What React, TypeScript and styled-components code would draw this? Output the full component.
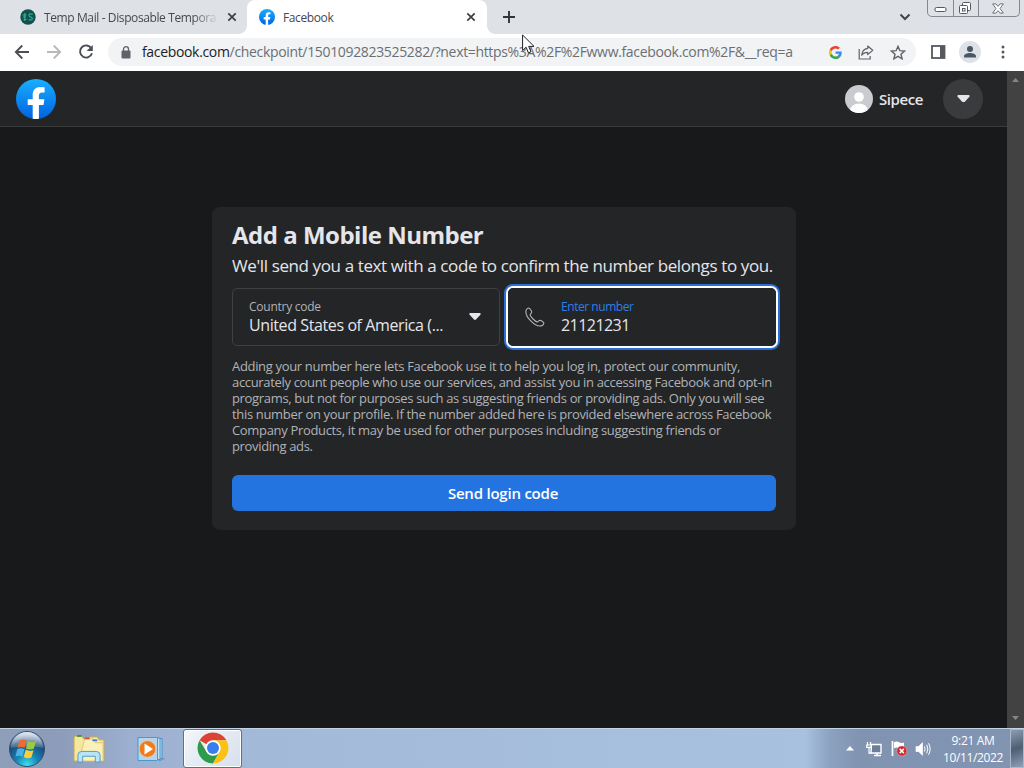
import styled, { createGlobalStyle, css } from "styled-components";
import type { ReactNode } from "react";

const URL_HOST = "facebook.com";
const URL_PATH = "/checkpoint/1501092823525282/?next=https%3A%2F%2Fwww.facebook.com%2F&__req=a";

const NOTICE = [
  "Adding your number here lets Facebook use it to help you log in, protect our community,",
  "accurately count people who use our services, and assist you in accessing Facebook and opt-in",
  "programs, but not for purposes such as suggesting friends or providing ads. Only you will see",
  "this number on your profile. If the number added here is provided elsewhere across Facebook",
  "Company Products, it may be used for other purposes including suggesting friends or",
  "providing ads.",
];

const FacebookLogo = ({ size, id }: { size: number; id: string }) => (
  <svg width={size} height={size} viewBox="0 0 40 40">
    <defs>
      <linearGradient id={id} x1="0" y1="0" x2="0" y2="1">
        <stop offset="0" stopColor="#19afff" />
        <stop offset="1" stopColor="#0062e0" />
      </linearGradient>
    </defs>
    <circle cx="20" cy="20" r="20" fill={`url(#${id})`} />
    <path
      d="M16.700 39.800V26h-5v-5.800h5v-4.300c0-5 3-7.800 7.500-7.800 2.200 0 4.400.4 4.400.4v4.900h-2.500c-2.400 0-3.200 1.500-3.200 3.100v3.700h5.500L27.500 26h-4.600v13.800a20 20 0 0 1-6.200 0z"
      fill="#fff"
    />
  </svg>
);

const CloseIcon = () => (
  <svg width="10" height="10" viewBox="0 0 10 10">
    <path d="M1.300 1.300l7.400 7.400M8.700 1.300L1.300 8.700" stroke="#3c4043" strokeWidth="1.700" />
  </svg>
);

const Caret = ({ width = 12, color = "#e4e6eb" }: { width?: number; color?: string }) => (
  <svg width={width} height={width * 0.6} viewBox="0 0 12 7">
    <path d="M1 0h10q1.200.6.400 1.600L7 6.400q-1 .9-2 0L.6 1.600Q-.2.600 1 0z" fill={color} />
  </svg>
);

const Tabs = () => (
  <TabStrip>
    <Tab $width={247}>
      <svg width="16" height="16" viewBox="0 0 16 16">
        <circle cx="8" cy="8" r="7.700" fill="#14504f" />
        <path
          d="M2.500 6h4M3 8h3M3.500 10.500h3M4.800 4v8M12.800 5.300c-3-1.200-4 .2-3.800 1.400.3 1.700 3.600 1.200 3.400 3-.1 1.300-2 1.700-3.700.8"
          stroke="#2fb58f"
          strokeWidth="1.100"
          fill="none"
        />
      </svg>
      <TabTitle $fade>Temp Mail - Disposable Tempora</TabTitle>
      <CloseIcon />
    </Tab>
    <Tab $width={240} $active>
      <FacebookLogo size={16} id="tabLogo" />
      <TabTitle>Facebook</TabTitle>
      <CloseIcon />
    </Tab>
    <NewTab>
      <svg width="12" height="12" viewBox="0 0 12 12">
        <path d="M6 0v12M0 6h12" stroke="#30353a" strokeWidth="1.900" />
      </svg>
    </NewTab>
    <TabSearch>
      <svg width="12" height="8" viewBox="0 0 12 8">
        <path d="M1.500 1.500L6 6l4.500-4.500" fill="none" stroke="#41464b" strokeWidth="2" />
      </svg>
    </TabSearch>
    <WindowControls>
      <Control $width={25}>
        <svg width="13" height="6" viewBox="0 0 13 6">
          <rect x="1" y=".5" width="11" height="4" rx="1.500" fill="#fff" stroke="#55595f" />
        </svg>
      </Control>
      <Control $width={25} $nudge={3}>
        <svg width="14" height="14" viewBox="0 0 14 14" stroke="#55595f" fill="#fff">
          <rect x="4.500" y="1.500" width="8" height="8" rx="1" />
          <rect x="1.500" y="4.500" width="8" height="8" rx="1" />
          <rect x="4.500" y="7.500" width="2.500" height="2.500" />
        </svg>
      </Control>
      <Control $width={41} $nudge={2}>
        <svg width="12" height="11" viewBox="0 0 13 11">
          <path
            d="M.7.500h3.500l2.300 2.700L8.800.5h3.500L8.700 5.500l3.600 5H8.800L6.500 7.800l-2.300 2.700H.7l3.600-5z"
            fill="#fff"
            stroke="#55595f"
            strokeWidth=".9"
          />
        </svg>
      </Control>
    </WindowControls>
  </TabStrip>
);

const AddressBar = () => (
  <Toolbar>
    <NavButtons>
      <svg width="16" height="16" viewBox="0 0 16 16" fill="none" stroke="#4b4e52" strokeWidth="1.800">
        <path d="M15 8H2M8.300 1.500L1.800 8l6.500 6.500" />
      </svg>
      <svg width="16" height="16" viewBox="0 0 16 16" fill="none" stroke="#b6b8bb" strokeWidth="1.800">
        <path d="M1 8h13M7.700 1.500L14.200 8l-6.500 6.500" />
      </svg>
      <svg width="16" height="16" viewBox="0 0 16 16">
        <path d="M13.300 4.200A6.100 6.100 0 1 0 14 9.300" fill="none" stroke="#4b4e52" strokeWidth="1.900" />
        <path d="M14.800.9v6.200H8.600z" fill="#4b4e52" />
      </svg>
    </NavButtons>
    <Omnibox>
      <svg width="10" height="13" viewBox="0 0 10 13">
        <rect x=".5" y="4.500" width="9" height="8" rx="1" fill="#5f6368" />
        <path d="M2.500 5V3.200a2.500 2.500 0 0 1 5 0V5" fill="none" stroke="#5f6368" strokeWidth="1.300" />
      </svg>
      <UrlText>
        <b>{URL_HOST}</b>
        {URL_PATH}
      </UrlText>
      <OmniboxActions>
        <svg width="13" height="13" viewBox="0 0 48 48">
          <path fill="#EA4335" d="M24 9.500c3.540 0 6.710 1.220 9.210 3.600l6.850-6.850C35.900 2.380 30.470 0 24 0 14.620 0 6.510 5.380 2.560 13.220l7.980 6.190C12.430 13.720 17.740 9.500 24 9.500z" />
          <path fill="#4285F4" d="M46.980 24.550c0-1.570-.15-3.090-.38-4.550H24v9.020h12.940c-.58 2.960-2.260 5.480-4.780 7.180l7.730 6c4.510-4.180 7.090-10.360 7.090-17.650z" />
          <path fill="#FBBC05" d="M10.530 28.590c-.48-1.450-.76-2.990-.76-4.590s.27-3.140.76-4.590l-7.980-6.190C.92 16.460 0 20.120 0 24c0 3.880.92 7.540 2.560 10.780l7.970-6.190z" />
          <path fill="#34A853" d="M24 48c6.480 0 11.930-2.130 15.890-5.810l-7.730-6c-2.150 1.450-4.920 2.300-8.160 2.300-6.260 0-11.570-4.220-13.470-9.910l-7.980 6.190C6.510 42.620 14.620 48 24 48z" />
        </svg>
        <svg width="16" height="15" viewBox="0 0 16 15" fill="none" stroke="#5f6368" strokeWidth="1.200">
          <path d="M1.200 4v10h11v-3" />
          <path d="M9.700 1l5 4.300-5 4.300V7.300c-2.700 0-4.700.9-6 3 .3-3.700 2.300-6.400 6-6.900z" strokeLinejoin="round" />
        </svg>
        <svg width="16" height="15" viewBox="0 0 16 15">
          <path d="M8 1.400l1.900 4.300 4.700.4L11 9.200l1.100 4.600L8 11.400l-4.100 2.400L5 9.200 1.400 6.100l4.700-.4z" fill="none" stroke="#5f6368" strokeWidth="1.400" />
        </svg>
      </OmniboxActions>
    </Omnibox>
    <ToolbarActions>
      <svg width="15" height="14" viewBox="0 0 15 14">
        <rect x="1" y="1" width="12.500" height="12" fill="#fff" stroke="#55585d" strokeWidth="1.800" />
        <path d="M9 1h5v12H9z" fill="#55585d" />
      </svg>
      <svg width="22" height="22" viewBox="0 0 22 22">
        <circle cx="11" cy="11" r="11" fill="#dee1e6" />
        <circle cx="11" cy="8" r="3" fill="#4a5568" />
        <path d="M5 16.500v-1.300c0-2.200 3.500-3.200 6-3.200s6 1 6 3.200v1.300z" fill="#4a5568" />
      </svg>
      <svg width="4" height="14" viewBox="0 0 4 14" fill="#55585d">
        <circle cx="2" cy="2" r="1.500" />
        <circle cx="2" cy="7" r="1.500" />
        <circle cx="2" cy="12" r="1.500" />
      </svg>
    </ToolbarActions>
  </Toolbar>
);

const Field = ({ label, value, focused, before, after }: {
  label: string;
  value: string;
  focused?: boolean;
  before?: ReactNode;
  after?: ReactNode;
}) => (
  <FieldBox $focused={focused}>
    {before}
    <FieldText $focused={focused}>
      <label>{label}</label>
      <span>{value}</span>
    </FieldText>
    {after}
  </FieldBox>
);

const CheckpointCard = () => (
  <Card>
    <Title>Add a Mobile Number</Title>
    <Subtitle>We'll send you a text with a code to confirm the number belongs to you.</Subtitle>
    <Fields>
      <Field label="Country code" value="United States of America (..." after={<Caret />} />
      <Field
        focused
        label="Enter number"
        value="21121231"
        before={
          <svg width="20" height="20" viewBox="0 0 20 20" fill="none" stroke="#b0b3b8" strokeWidth="1.100">
            <path d="M4.200 1.200C3 .6 1.300 2.200 1 3.700c-.6 3 2 7.500 5 10.500 3.100 3.100 7.300 5.300 10.200 4.700 1.500-.3 3-1.900 2.500-3.100-.3-.9-2.700-2.400-3.700-2.500-1.200 0-1.800 1.700-2.900 1.600-1.700-.2-6.800-5.200-7-7-.1-1 1.600-1.700 1.600-2.800C6.700 4 5.200 1.700 4.200 1.200z" />
          </svg>
        }
      />
    </Fields>
    <Notice>
      {NOTICE.map((line) => (
        <span key={line}>{line}</span>
      ))}
    </Notice>
    <SubmitButton type="button">Send login code</SubmitButton>
  </Card>
);

const Taskbar = () => (
  <TaskbarRow>
    <StartButton>
      <svg width="38" height="38" viewBox="0 0 38 38">
        <defs>
          <radialGradient id="orb" cx=".5" cy=".95" r=".95">
            <stop offset="0" stopColor="#3fe0f0" />
            <stop offset=".35" stopColor="#1583b4" />
            <stop offset=".7" stopColor="#1d4a78" />
            <stop offset="1" stopColor="#9fb6cc" />
          </radialGradient>
          <linearGradient id="orbShine" x1="0" y1="0" x2="0" y2="1">
            <stop offset="0" stopColor="#fff" stopOpacity=".75" />
            <stop offset="1" stopColor="#fff" stopOpacity=".15" />
          </linearGradient>
        </defs>
        <circle cx="19" cy="19" r="17.500" fill="url(#orb)" stroke="#31506f" />
        <path d="M3 18a16 16 0 0 1 32 0q-16-4-32 0z" fill="url(#orbShine)" />
        <path d="M11.500 10.500q3.500-2 7-.2l-1.800 7.500q-3.500-1.700-7.200 0z" fill="#ee6a2e" />
        <path d="M19.800 11q3.700 2 8.200.2l-2.200 7.500q-4 1.700-7.800-.3z" fill="#9bca3e" />
        <path d="M9.200 19.200q3.700-1.700 7.200 0l-1.900 7.300q-3.500-1.600-7 .1z" fill="#4db1e6" />
        <path d="M17.700 19.800q3.800 2 7.800.4l-2.100 7.400q-4 1.600-7.700-.5z" fill="#fcce3b" />
      </svg>
    </StartButton>
    <TaskButton $width={58}>
      <svg width="32" height="29" viewBox="0 0 33 30">
        <path d="M1 3q0-2 2-2h6l2 3h6V2h8l2 3h4q1 0 1 2v20H1z" fill="#f6e7a0" stroke="#c9a94d" />
        <path d="M12 4h9l2 4h8v19H6z" fill="#fbf0b8" stroke="#d6bd68" strokeWidth=".8" />
        <path d="M4 1h5" stroke="#35a042" strokeWidth="2" />
        <path d="M12 3.500h5" stroke="#d9503f" strokeWidth="1.800" />
        <path d="M20 5.500h5" stroke="#2f7ed1" strokeWidth="1.800" />
        <path d="M5 28v-7q0-4 4-4h15q4 0 4 4v7h-5v-6H10v6z" fill="#b9e3f7" stroke="#4f9cc9" />
      </svg>
    </TaskButton>
    <TaskButton $width={64} $shift={2}>
      <svg width="28" height="26" viewBox="0 0 28 26">
        <path d="M21 2.500h4v20h-4z" fill="#b7d7f0" stroke="#3c8fc6" strokeWidth=".9" />
        <path d="M18 2h5v21.500h-5z" fill="#c3e0f4" stroke="#3c8fc6" strokeWidth=".9" />
        <path d="M1 1.500h19.500v23H1z" fill="#b3d6f0" stroke="#4b98ca" />
        <circle cx="10.500" cy="13" r="8.300" fill="#f07b1f" stroke="#f8c38c" strokeWidth=".8" />
        <path d="M7.500 7.500L16 13l-8.500 5.500z" fill="#fff" />
        <path d="M22 25l5.500-2.500" stroke="#6f92bb" strokeWidth="1.200" />
      </svg>
    </TaskButton>
    <TaskButton $width={59} $active>
      <svg width="32" height="32" viewBox="0 0 32 32">
        <path d="M16 16L2.580 8.250A15.500 15.500 0 0 1 29.420 8.250L16 8.250z" fill="#dd4335" />
        <path d="M2.580 8.250A15.500 15.500 0 0 0 16 31.500L22.500 19.750 16 16 9.500 19.750z" fill="#2d9b4a" />
        <path d="M29.420 8.250A15.500 15.500 0 0 1 16 31.500l6.500-11.750L20.500 16 16 8.250z" fill="#fbc116" />
        <circle cx="16" cy="16" r="7.700" fill="#fff" />
        <circle cx="16" cy="16" r="6" fill="#3b7ded" />
      </svg>
    </TaskButton>
    <Tray>
      <TrayArrow width="8" height="5" viewBox="0 0 8 5">
        <path d="M4 0l4 4.500H0z" fill="#fff" />
      </TrayArrow>
      <svg width="17" height="16" viewBox="0 0 17 16">
        <path d="M5.500 3.500H15v8.500H5z" fill="#6d7f98" stroke="#fff" strokeWidth="1.400" />
        <path d="M8 14.500h7M11 12v2.500" stroke="#fff" strokeWidth="1.500" />
        <path d="M1.500 1v3M4.500 1v3M.7 4h4.600v2.300H.7zM3 6.500v5.700h2.500" stroke="#fff" strokeWidth="1.200" fill="none" />
      </svg>
      <svg width="16" height="17" viewBox="0 0 16 17">
        <path d="M1.500 1v15" stroke="#fff" strokeWidth="1.700" />
        <path d="M3 2.200q3-1.500 5 0t5 .3v6.300q-3 1-5-.5t-5 0z" fill="#fff" />
        <circle cx="10.800" cy="11" r="5" fill="#d3232b" stroke="#f0a5a5" strokeWidth=".6" />
        <path d="M8.700 8.900l4.200 4.200M12.900 8.900l-4.200 4.200" stroke="#fff" strokeWidth="1.500" />
      </svg>
      <svg width="16" height="16" viewBox="0 0 16 16" fill="none" stroke="#fff">
        <path d="M1 5.500h2.500L7.500 1.700v12.600L3.500 10.500H1z" fill="#fff" strokeWidth=".7" />
        <path d="M9.500 5.500q1.300 2.500 0 5M11.700 3.700q2.300 4.300 0 8.600M13.500 2.200q3.300 5.800 0 11.600" strokeWidth="1" />
      </svg>
      <Clock>
        <span>9:21 AM</span>
        <span>10/11/2022</span>
      </Clock>
      <ShowDesktop />
    </Tray>
  </TaskbarRow>
);

export default function App() {
  return (
    <Screen>
      <GlobalStyle />
      <Tabs />
      <AddressBar />
      <Viewport>
        <Page>
          <PageHeader>
            <FacebookLogo size={40} id="headerLogo" />
            <Account>
              <svg width="28" height="28" viewBox="0 0 28 28">
                <defs>
                  <clipPath id="avatar">
                    <circle cx="14" cy="14" r="14" />
                  </clipPath>
                </defs>
                <g clipPath="url(#avatar)">
                  <path d="M0 0h28v28H0z" fill="#c9cbd0" />
                  <circle cx="14" cy="12" r="4.800" fill="#fff" />
                  <ellipse cx="14" cy="25.500" rx="8.800" ry="7" fill="#fff" />
                </g>
              </svg>
              <span>Sipece</span>
              <MenuButton>
                <Caret width={13} />
              </MenuButton>
            </Account>
          </PageHeader>
          <CheckpointCard />
        </Page>
        <Scrollbar>
          <svg width="7" height="4" viewBox="0 0 7 4">
            <path d="M3.500 0L7 4H0z" fill="#858585" />
          </svg>
          <svg width="7" height="4" viewBox="0 0 7 4">
            <path d="M3.500 4L0 0h7z" fill="#858585" />
          </svg>
        </Scrollbar>
      </Viewport>
      <Taskbar />
      <Pointer width="13" height="20" viewBox="0 0 13 20">
        <path d="M.6 1v15.500l3.500-3.300 2.300 5.600 2.600-1-2.300-5.400h5.300z" fill="#fff" stroke="#1d1d1d" />
      </Pointer>
    </Screen>
  );
}

const GlobalStyle = createGlobalStyle`
  * {
    box-sizing: border-box;
  }
  body {
    margin: 0;
    overflow: hidden;
    font-family: "Open Sans", "Noto Sans", sans-serif;
  }
  svg {
    display: block;
    flex-shrink: 0;
  }
`;

const Screen = styled.div`
  position: relative;
  width: 1024px;
  height: 768px;
  display: flex;
  flex-direction: column;
  overflow: hidden;
  background: #18191a;
`;

const TabStrip = styled.div`
  display: flex;
  height: 34px;
  background: #dee1e6;
`;

const Tab = styled.div<{ $width: number; $active?: boolean }>`
  position: relative;
  display: flex;
  align-items: center;
  width: ${({ $width }) => $width}px;
  padding: 0 ${({ $active }) => ($active ? "11px 0 12px" : "10px 0 20px")};
  color: #45494d;
  ${({ $active }) =>
    $active &&
    css`
      background: #fff;
      border-radius: 8px 8px 0 0;
      &::before,
      &::after {
        content: "";
        position: absolute;
        bottom: 0;
        width: 8px;
        height: 8px;
      }
      &::before {
        left: -8px;
        background: radial-gradient(circle at 0 0, transparent 7.5px, #fff 8px);
      }
      &::after {
        right: -8px;
        background: radial-gradient(circle at 100% 0, transparent 7.5px, #fff 8px);
      }
    `}
`;

const TabTitle = styled.span<{ $fade?: boolean }>`
  flex: 1;
  margin: 0 8px;
  font-size: 12px;
  letter-spacing: -0.39px;
  white-space: nowrap;
  ${({ $fade }) =>
    $fade &&
    css`
      mask-image: linear-gradient(to right, #000 85%, transparent);
    `}
`;

const NewTab = styled.div`
  display: flex;
  align-items: center;
  padding-left: 16px;
`;

const TabSearch = styled.div`
  display: flex;
  align-items: center;
  margin-left: auto;
  padding-right: 16px;
`;

const WindowControls = styled.div`
  display: flex;
  height: 17px;
  margin-right: 4px;
  border: 1px solid #85898f;
  border-top: 0;
  border-radius: 0 0 5px 5px;
`;

const Control = styled.div<{ $width: number; $nudge?: number }>`
  display: flex;
  align-items: center;
  justify-content: center;
  width: ${({ $width }) => $width}px;
  padding-right: ${({ $nudge = 0 }) => $nudge}px;
  & + & {
    border-left: 1px solid #85898f;
  }
  &:first-child {
    padding-top: 4px;
  }
`;

const Toolbar = styled.div`
  display: flex;
  align-items: center;
  height: 37px;
  padding: 0 19px 1px 14px;
  background: #fff;
`;

const NavButtons = styled.div`
  display: flex;
  gap: 16px;
  width: 94px;
`;

const Omnibox = styled.div`
  display: flex;
  align-items: center;
  width: 808px;
  height: 28px;
  padding: 0 10px 0 13px;
  border-radius: 14px;
  background: #f1f3f4;
`;

const UrlText = styled.span`
  margin-left: 11px;
  padding-bottom: 2px;
  color: #6b6f74;
  font-size: 14px;
  letter-spacing: -0.335px;
  white-space: nowrap;
  b {
    color: #202124;
    font-weight: 400;
  }
`;

const OmniboxActions = styled.div`
  display: flex;
  align-items: center;
  gap: 16px;
  margin-left: auto;
`;

const ToolbarActions = styled.div`
  display: flex;
  align-items: center;
  gap: 13px;
  width: 74px;
  margin-left: 15px;
  svg:last-child {
    margin-left: auto;
  }
`;

const Viewport = styled.div`
  display: flex;
  height: 657px;
`;

const Page = styled.div`
  width: 1007px;
  background: #18191a;
`;

const PageHeader = styled.header`
  display: flex;
  align-items: center;
  justify-content: space-between;
  height: 56px;
  padding: 0 24px 0 16px;
  border-bottom: 1px solid #3a3b3c;
  background: #242526;
`;

const Account = styled.div`
  display: flex;
  align-items: center;
  color: #e4e6eb;
  font-size: 15px;
  font-weight: 600;
  span {
    margin: 0 20px 0 6px;
    letter-spacing: -0.4px;
  }
`;

const MenuButton = styled.div`
  display: flex;
  align-items: center;
  justify-content: center;
  width: 40px;
  height: 40px;
  border-radius: 50%;
  background: #3a3b3c;
`;

const Scrollbar = styled.div`
  display: flex;
  flex-direction: column;
  align-items: center;
  justify-content: space-between;
  width: 17px;
  padding: 7px 0 8px;
  background: #424242;
`;

const Card = styled.section`
  width: 584px;
  height: 323px;
  margin: 80px 0 0 212px;
  padding: 12px 20px 20px;
  border-radius: 8px;
  background: #242526;
  color: #e4e6eb;
  white-space: nowrap;
`;

const Title = styled.h1`
  margin: 0;
  font-size: 24px;
  font-weight: 700;
  letter-spacing: -0.5px;
  line-height: 32px;
`;

const Subtitle = styled.p`
  margin: 5px 0 0;
  font-size: 17px;
  letter-spacing: -0.385px;
  line-height: 20px;
`;

const Fields = styled.div`
  display: flex;
  gap: 8px;
  margin-top: 12px;
`;

const FieldBox = styled.div<{ $focused?: boolean }>`
  display: flex;
  align-items: center;
  width: 268px;
  height: 58px;
  padding: 0 18px 0 16px;
  border: 1px solid #3e4042;
  border-radius: 5px;
  ${({ $focused }) =>
    $focused &&
    css`
      border-color: #242526;
      box-shadow: 0 0 0 2px #fff, 0 0 0 4px #2a6fd6;
    `}
`;

const FieldText = styled.div<{ $focused?: boolean }>`
  display: flex;
  flex-direction: column;
  flex: 1;
  margin-left: ${({ $focused }) => ($focused ? 16 : 0)}px;
  padding-bottom: 2px;
  label {
    color: ${({ $focused }) => ($focused ? "#2d7fe8" : "#b0b3b8")};
    font-size: 12px;
    letter-spacing: ${({ $focused }) => ($focused ? -0.45 : -0.25)}px;
    line-height: 17px;
  }
  span {
    font-size: 16px;
    letter-spacing: ${({ $focused }) => ($focused ? -0.55 : -0.4)}px;
    line-height: 20px;
  }
`;

const Notice = styled.p`
  display: flex;
  flex-direction: column;
  margin: 12px 0 0;
  color: #b0b3b8;
  font-size: 13px;
  letter-spacing: -0.33px;
  line-height: 16px;
`;

const SubmitButton = styled.button`
  display: block;
  width: 544px;
  height: 36px;
  margin-top: 21px;
  padding: 0 2px 0 0;
  border: 0;
  border-radius: 6px;
  background: #2374e1;
  color: #fff;
  font-family: inherit;
  font-size: 15px;
  font-weight: 600;
  letter-spacing: -0.22px;
`;

const TaskbarRow = styled.footer`
  display: flex;
  height: 40px;
  border-top: 1px solid #c3d3e6;
  background: linear-gradient(to right, #8f9fb9 0, #8c9cb9 60px, #9dafd0 130px, #a3b9d8 250px, #a6bfdc 600px, #a8c1de 805px, #8ba2c0 830px, #8093b0 860px, #8194b0 1024px);
`;

const StartButton = styled.div`
  display: flex;
  align-items: center;
  width: 60px;
  padding-left: 8px;
`;

const TaskButton = styled.div<{ $width: number; $active?: boolean; $shift?: number }>`
  display: flex;
  align-items: center;
  justify-content: center;
  width: ${({ $width }) => $width}px;
  padding: 1px 0 0 ${({ $shift = 0 }) => $shift}px;
  ${({ $active }) =>
    $active &&
    css`
      margin-left: 1px;
      padding: 0 0 2px;
      border: 1px solid #5f7088;
      border-radius: 3px;
      background: linear-gradient(135deg, #f3f6fa, #d5dfec);
      box-shadow: inset 0 0 0 1px #fff;
    `}
`;

const Tray = styled.div`
  display: flex;
  align-items: center;
  gap: 8px;
  margin-left: auto;
`;

const TrayArrow = styled.svg`
  margin-right: 4px;
`;

const Clock = styled.div`
  display: flex;
  flex-direction: column;
  align-items: center;
  width: 62px;
  margin: 0 -2px 0 3px;
  color: #fff;
  font-size: 12px;
  letter-spacing: -0.35px;
  line-height: 17px;
`;

const ShowDesktop = styled.div`
  align-self: stretch;
  width: 14px;
  border: 1px solid #a9b9cc;
  background: linear-gradient(160deg, #8e9db0, #4e5f73 50%, #8ea0b6);
`;

const Pointer = styled.svg`
  position: absolute;
  top: 34px;
  left: 522px;
`;
